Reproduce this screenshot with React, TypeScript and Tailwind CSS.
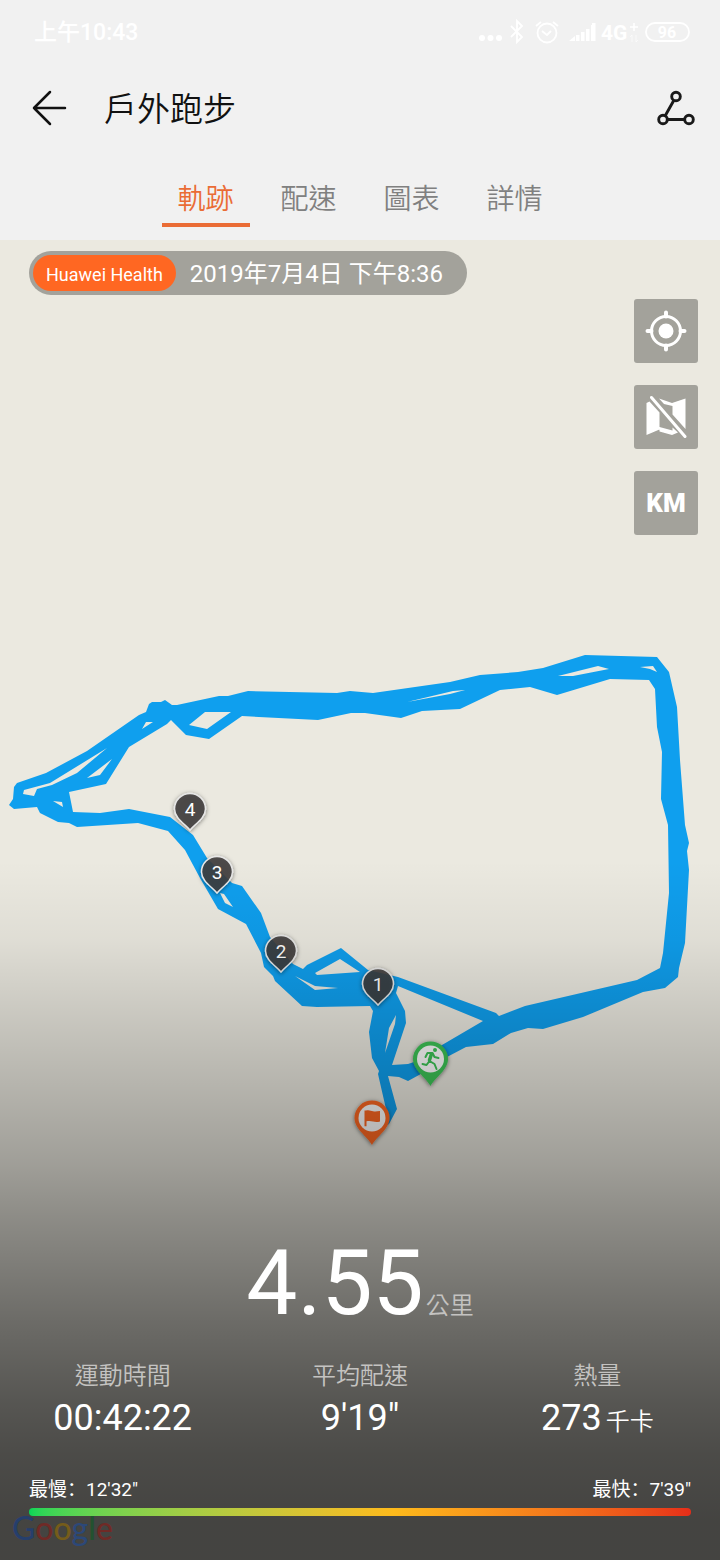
import React from "react";

const TRACK = [
  // outer edge
  "M9 805 13 799 14 787 17 783 46 773 87 751 139 715 146 712 149 704 152 702 161 702 165 700 172 705 177 705 219 696 228 696 248 691 337 693 350 691 373 693 450 682 480 675 518 672 543 668 585 655 657 657 669 672 677 707 680 760 685 825 689 843 687 851 689 870 685 943 679 968 678 977 665 988 643 992 583 1017 543 1029 528 1028 511 1033 493 1044 466 1047 447 1057 419 1075 408 1081 399 1077 388 1076 397 1109 389 1124 380 1130 386 1109 378 1074 379 1071 372 1058 369 1032 373 1011 370 1006 317 1007 302 1006 275 981 273 976 264 967 261 953 246 924 218 909 200 878 185 850 168 831 138 823 77 827 69 823 58 822 40 813 37 807 14 809Z",
  // enclosed area of the loop
  "M69 792 106 784 129 747 167 724 171 720 186 735 209 739 242 716 318 720 351 713 365 713 401 718 422 711 460 709 500 690 530 687 557 695 610 679 649 680 655 689 657 727 662 752 661 799 668 825 669 893 663 953 660 968 637 980 525 1006 499 1016 496 1013 398 977 368 970 341 948 307 965 303 969 293 964 270 937 261 913 242 886 232 883 207 858 193 835 170 817 129 809 100 813 73 812Z",
  // gaps between laps
  "M24 790 23 794 34 796 37 789 52 785 77 773 107 748 50 783Z",
  "M87 778 112 759 100 775Z",
  "M142 729 146 722 153 722Z",
  "M53 801 62 802 63 807Z",
  "M189 725 205 712 231 712 207 729Z",
  "M407 702 453 691 465 690 450 694Z",
  "M558 676 598 666 609 669 573 676Z",
  "M640 667 653 666 657 672 650 669Z",
  "M220 893 224 894 233 907 225 903Z",
  "M295 976 315 986 338 988 315 990Z",
  "M315 973 340 959 360 972 317 975Z",
  "M396 993 405 1011 406 1023 392 1065 408 1064 414 1062 442 1045 483 1021 398 986Z",
  "M385 1053 389 1028 396 1015 395 1024Z",
].join(" ");

const KM_PINS = [
  { n: 4, x: 190, y: 809 },
  { n: 3, x: 217, y: 872 },
  { n: 2, x: 281, y: 951 },
  { n: 1, x: 378, y: 984 },
];

const TABS = ["軌跡", "配速", "圖表", "詳情"];

const GOOGLE: [string, string][] = [
  ["G", "text-[#263f6c]"],
  ["o", "text-[#702a26]"],
  ["o", "text-[#755c1a]"],
  ["g", "text-[#2c4878]"],
  ["l", "text-[#23522f]"],
  ["e", "text-[#702a26]"],
];

function StatusBar() {
  return (
    <div className="flex h-16 items-center justify-between pl-[34px] pr-[30px] text-white">
      <span className="pt-[3px] text-[23px] font-medium">上午10:43</span>
      <svg width="214" height="28" viewBox="0 0 214 28" fill="none" stroke="currentColor" strokeWidth="1.8">
        <g fill="currentColor" stroke="none">
          <circle cx="6" cy="20" r="3" />
          <circle cx="14.500" cy="20" r="3" />
          <circle cx="23" cy="20" r="3" />
          <path d="M93 23l6-5v5zM100 17h3.500v6H100zM105 14h3.500v9H105zM110 11h3.500v12H110zM115 7h3v16h-3zM119 4h0z" />
          <path d="M116 5h3.500v18H116z" />
        </g>
        <path d="M35 8l11 11-5 5V3l5 5-11 11" />
        <circle cx="71" cy="15" r="9.500" />
        <path d="M66 13l5 4 4-4M60 8l5-4M77 4l5 4" />
        <text x="125" y="22" fontSize="21" fontWeight="700" fill="currentColor" stroke="none">4G</text>
        <path d="M154 9h8M158 5v8" strokeWidth="1.500" />
        <path d="M156 24v-7l-2 2M160 17v7l2-2" strokeWidth="1" opacity=".6" />
        <rect x="170" y="5" width="43" height="18" rx="9" />
        <text x="191" y="20" fontSize="16" fontWeight="700" textAnchor="middle" fill="currentColor" stroke="none">96</text>
      </svg>
    </div>
  );
}

function Header() {
  return (
    <header className="bg-[#f1f1f1]">
      <StatusBar />
      <div className="flex h-[88px] items-center pl-8 pr-6">
        <button aria-label="返回" className="text-[#111]">
          <svg width="36" height="36" viewBox="0 0 36 36" fill="none" stroke="currentColor" strokeWidth="2.500" strokeLinecap="round" strokeLinejoin="round">
            <path d="M33 18H2M18 2L2 18l16 16" />
          </svg>
        </button>
        <h1 className="ml-9 flex-1 pt-1 text-[33px] font-[350] text-[#111]">戶外跑步</h1>
        <button aria-label="路線" className="text-[#1a1a1a]">
          <svg width="40" height="36" viewBox="0 0 40 36" fill="none" stroke="currentColor" strokeWidth="2.900">
            <circle cx="20" cy="6.500" r="4.300" />
            <circle cx="7" cy="29.500" r="4.300" />
            <circle cx="33" cy="29.500" r="4.300" />
            <path d="M17.900 10.300L9.200 25.700M11.300 29.500h17.400" />
          </svg>
        </button>
      </div>
      <nav className="flex h-[88px] justify-center gap-[15px] pb-[13px]">
        {TABS.map((t, i) => (
          <button
            key={t}
            className={
              i === 0
                ? "w-[88px] border-b-4 border-[#ea6c35] pt-6 text-[28px] font-[350] text-[#ea6c35]"
                : "w-[88px] border-b-4 border-transparent pt-6 text-[28px] font-[350] text-[#808080]"
            }
          >
            {t}
          </button>
        ))}
      </nav>
    </header>
  );
}

function RouteMap() {
  return (
    <svg className="absolute inset-0 h-full w-full" viewBox="0 240 720 1320" preserveAspectRatio="xMidYMin slice" role="img" aria-label="跑步軌跡">
      <defs>
        <filter id="pin-shadow" x="-40%" y="-40%" width="180%" height="180%">
          <feDropShadow dx="0" dy="1" stdDeviation="2" floodColor="#000" floodOpacity=".5" />
        </filter>
      </defs>
      <path d={TRACK} fill="#0f9fee" fillRule="evenodd" strokeLinejoin="round" />
      {KM_PINS.map((p) => (
        <g key={p.n} transform={`translate(${p.x} ${p.y})`}>
          <path
            d="M0 21C-5 15-15.500 9-15.500 0a15.500 15.500 0 1 1 31 0C15.500 9 5 15 0 21Z"
            fill="#403d3b" fillOpacity=".86" stroke="#e8e8e8" strokeWidth="1.500" filter="url(#pin-shadow)"
          />
          <text y="7" textAnchor="middle" fontSize="19" fill="#fff">{p.n}</text>
        </g>
      ))}
      <g transform="translate(430.500 1059)" filter="url(#pin-shadow)">
        <path d="M0 27C-5 18-17.500 11-17.500 0a17.500 17.500 0 1 1 35 0C17.500 11 5 18 0 27Z" fill="#3cc457" />
        <circle r="13.500" fill="#fff" />
        <g fill="none" stroke="#3cc457" strokeWidth="2" strokeLinecap="round" strokeLinejoin="round">
          <path d="M-5-2L-3-6 2-6 4-2 8-1M-8 5L-4 6-1 2 4 5 6 10" />
          <path d="M1-5L-1 1" strokeWidth="3.500" />
          <circle cx="4.500" cy="-9" r="1" />
        </g>
      </g>
      <g transform="translate(372 1118)" filter="url(#pin-shadow)">
        <path d="M0 27C-5 18-17.500 11-17.500 0a17.500 17.500 0 1 1 35 0C17.500 11 5 18 0 27Z" fill="#ff6722" />
        <circle r="13.500" fill="#fff" />
        <path d="M-7.500-7.500h1.500c3-1 5 .3 7 .8 2 .4 4 .2 7-.3V3.500c-3 .8-5 .5-7 0-2-.5-4-.8-6.500-.2v5H-7.500z" fill="#ff6722" />
      </g>
    </svg>
  );
}

function MapControls() {
  const cls = "flex size-16 items-center justify-center rounded-[3px] bg-[#a3a29b] text-white";
  return (
    <div className="mt-1 flex flex-col gap-[22px] self-end pr-[22px]">
      <button aria-label="定位" className={cls}>
        <svg width="42" height="42" viewBox="0 0 42 42" fill="none" stroke="currentColor" strokeWidth="3">
          <circle cx="21" cy="21" r="14.500" />
          <circle cx="21" cy="21" r="7.500" fill="currentColor" stroke="none" />
          <path d="M21 2.500v4M21 35.500v4M2.500 21h4M35.500 21h4" strokeWidth="4" strokeLinecap="round" />
        </svg>
      </button>
      <button aria-label="隱藏地圖" className={cls}>
        <svg width="42" height="44" viewBox="0 0 42 44" fill="currentColor">
          <path d="M1.500 8L4.500 6.500 14.500 17.500V34.500L1.500 40ZM14 3.500L27 8 40.500 3.500V34L27.500 19.500V11L19 9ZM14.500 32L27.500 35.500V32.500L33 37.500 27 40 14.500 36.500Z" />
          <path d="M6.500 2.500L40 41.500" stroke="currentColor" strokeWidth="3" strokeLinecap="round" />
        </svg>
      </button>
      <button aria-label="公里標記" className={cls + " text-[26px] font-black"}>KM</button>
    </div>
  );
}

function Stat({ label, value, unit }: { label: string; value: string; unit?: string }) {
  return (
    <div className="flex flex-col items-center">
      <dt className="text-[24px] leading-8 font-[350] text-[#c4c3c1]">{label}</dt>
      <dd className="flex items-baseline gap-1 text-[36px] leading-[52px]">
        {value}
        {unit && <span className="text-[24px] font-[350]">{unit}</span>}
      </dd>
    </div>
  );
}

function Summary() {
  return (
    <section className="mt-auto pb-11 text-white">
      <p className="flex items-baseline justify-center gap-0.5 text-[91px] leading-[108px]">
        4.55<span className="text-[24px] font-[350] text-[#c4c3c1]">公里</span>
      </p>
      <dl className="grid grid-cols-3 px-1">
        <Stat label="運動時間" value="00:42:22" />
        <Stat label="平均配速" value={"9'19\""} />
        <Stat label="熱量" value="273" unit="千卡" />
      </dl>
      <div className="mx-[29px] mt-7">
        <div lang="zh-CN" className="flex justify-between pb-1 font-['Roboto','Noto_Sans_CJK_SC',sans-serif] text-[19px] leading-7">
          <span>最慢：12'32"</span>
          <span>最快：7'39"</span>
        </div>
        <div className="h-2 rounded-full bg-linear-to-r from-[#04d657] via-[#fdba1b] via-55% to-[#e62d19]" />
      </div>
    </section>
  );
}

export default function App() {
  return (
    <div lang="zh-TW" className="flex min-h-screen flex-col font-['Roboto','Noto_Sans_CJK_TC',sans-serif]">
      <Header />
      <main className="relative flex flex-1 flex-col bg-[#ebe9e0]">
        <RouteMap />
        <div className="absolute inset-0 bg-[linear-gradient(to_bottom,rgba(0,0,0,0)_47%,rgba(0,0,0,0.05)_53%,rgba(0,0,0,0.15)_59%,rgba(0,0,0,0.32)_70%,rgba(0,0,0,0.4)_74%,rgba(0,0,0,0.54)_82%,rgba(0,0,0,0.63)_88%,rgba(0,0,0,0.68)_92%,rgba(0,0,0,0.71)_97%)]" />
        <div aria-label="Google" className="absolute bottom-2.5 left-3 font-['Lato',sans-serif] text-[32px] leading-[44px] font-medium">
          {GOOGLE.map(([c, cls], i) => (
            <span key={i} className={cls}>{c}</span>
          ))}
        </div>
        <div className="relative flex flex-1 flex-col pt-[11px]">
          <div className="ml-[29px] flex h-11 items-center self-start rounded-full bg-[#a3a29b] pr-6 pl-1 text-white">
            <span className="flex h-9 items-center rounded-full bg-[#ff6722] px-[13px] pt-0.5 text-[18px]">Huawei Health</span>
            <span className="ml-3.5 pt-0.5 text-[24px]">2019年7月4日 下午8:36</span>
          </div>
          <MapControls />
          <Summary />
        </div>
      </main>
    </div>
  );
}
